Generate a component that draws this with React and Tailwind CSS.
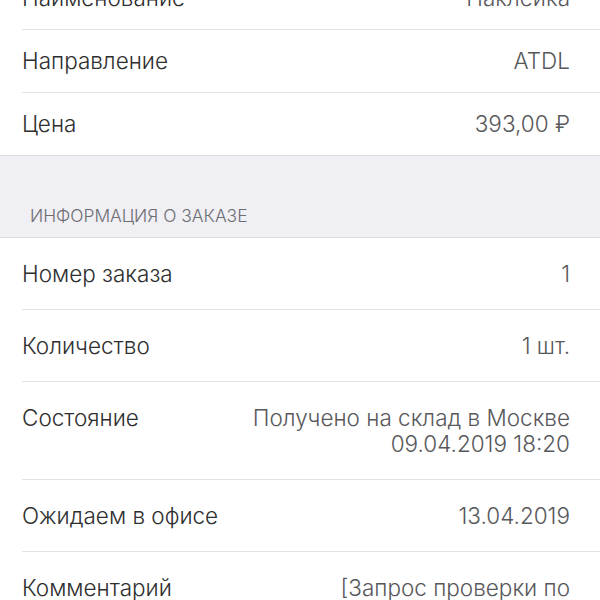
import React from "react";

const productRows = [
  { label: "Наименование", value: "Наклейка" },
  { label: "Направление", value: "ATDL" },
  { label: "Цена", value: "393,00 ₽" },
];

const orderRows = [
  { label: "Номер заказа", value: "1" },
  { label: "Количество", value: "1 шт." },
  { label: "Состояние", value: ["Получено на склад в Москве", "09.04.2019 18:20"] },
  { label: "Ожидаем в офисе", value: "13.04.2019" },
  { label: "Комментарий", value: ["[Запрос проверки по", "наличию товара]"] },
];

function Row({ label, value, last, compact }) {
  const lines = Array.isArray(value) ? value : [value];
  return (
    <div className="pl-[22px]">
      <div
        className={`flex justify-between items-start pr-[30px] ${compact ? "py-[18px]" : "pt-[23px] pb-[22px]"} ${
          last ? "" : "border-b border-[#e3e3e6]"
        }`}
      >
        <span className="text-[#2e2e2e] shrink-0">{label}</span>
        <div className="text-right text-[#58585b]">
          {lines.map((l, i) => (
            <div key={i}>{l}</div>
          ))}
        </div>
      </div>
    </div>
  );
}

export default function App() {
  return (
    <div
      className="w-[600px] h-[600px] overflow-hidden bg-[#efeff4] text-[22.5px] leading-[26px] font-light"
      style={{ fontFamily: "Inter, 'Noto Sans', sans-serif" }}
    >
      <div className="-mt-[33px] bg-white border-b border-[#dcdce0]">
        {productRows.map((r, i) => (
          <Row key={r.label} {...r} compact last={i === productRows.length - 1} />
        ))}
      </div>

      <div className="h-[81px] px-[30px] flex items-end pb-[10px]">
        <span className="text-[17.4px] leading-[22px] text-[#6d6d72] uppercase">Информация о заказе</span>
      </div>

      <div className="bg-white border-t border-[#dcdce0]">
        {orderRows.map((r) => (
          <Row key={r.label} {...r} />
        ))}
      </div>
    </div>
  );
}
